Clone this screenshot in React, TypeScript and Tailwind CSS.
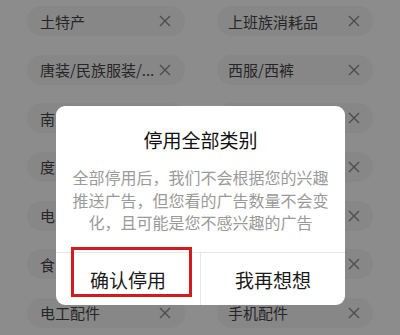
import React from "react"

// rows 3-6 sit under the dialog; only their first character shows
const left = ["土特产", "唐装/民族服装/...", "南", "度", "电", "食", "电工配件"]
const right = ["上班族消耗品", "西服/西裤", "", "", "", "", "手机配件"]

const font = { fontFamily: '"Noto Sans CJK SC", "Noto Sans", sans-serif' }

function Cross() {
  return (
    <svg width="12" height="12" viewBox="0 0 12 12" className="shrink-0">
      <path d="M1 1 L11 11 M11 1 L1 11" stroke="#4d4d4d" strokeWidth="1.4" fill="none" />
    </svg>
  )
}

function Chip({ label, textPad }: { label: string; textPad: string }) {
  return (
    <div className={`h-[30px] rounded-full bg-[#878787] flex items-center justify-between ${textPad}`}>
      <span className="text-[15px] leading-none text-[#262626] whitespace-nowrap">{label}</span>
      <Cross />
    </div>
  )
}

export default function App() {
  return (
    <div className="relative w-[400px] h-[335px] overflow-hidden bg-[#8c8c8c]" style={font}>
      {/* background list */}
      <div className="flex flex-col gap-y-[18.67px] pt-[6px]">
        {left.map((l, i) => (
          <div key={i} className="flex">
            <div className="ml-[27px] w-[158px]">
              <Chip label={l} textPad="pl-[13px] pr-[14px]" />
            </div>
            <div className="ml-[32px] w-[156px]">
              <Chip label={right[i]} textPad="pl-[11px] pr-[13px]" />
            </div>
          </div>
        ))}
      </div>

      {/* dialog */}
      <div className="absolute left-[56px] top-[106px] w-[289px] h-[199px] bg-white rounded-[9px] flex flex-col">
        <div className="pt-[22px] text-center text-[19px] leading-[24px] text-[#111]">停用全部类别</div>
        <div className="mt-[14px] px-[16px] text-center text-[16px] leading-[22.5px] text-[#9a9a9a]">
          全部停用后，我们不会根据您的兴趣推送广告，但您看的广告数量不会变化，且可能是您不感兴趣的广告
        </div>
        <div className="mt-auto h-[53px] border-t border-[#e6e6e6] flex">
          <div className="relative flex-1 flex items-center justify-center pt-[3px] text-[19px] text-[#1a1a1a]">
            确认停用
            <div className="absolute left-[15px] top-[-6px] w-[121px] h-[50px] border-[3px] border-[#d41a1f]" />
          </div>
          <div className="flex-1 border-l border-[#e6e6e6] flex items-center justify-center pt-[3px] text-[19px] text-[#1a1a1a]">
            我再想想
          </div>
        </div>
      </div>
    </div>
  )
}
